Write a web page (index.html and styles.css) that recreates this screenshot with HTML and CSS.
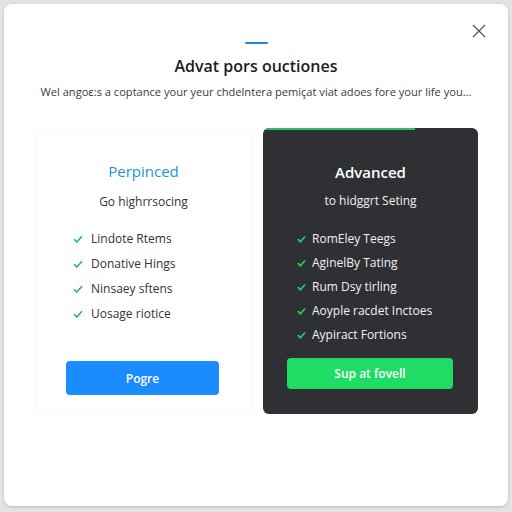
FILE: index.html
```html
<!DOCTYPE html>
<html>
<head>
<meta charset="utf-8">
<link rel="stylesheet" href="styles.css">
</head>
<body>
<div class="modal">
  <button class="close" aria-label="Close">
    <svg width="14" height="14" viewBox="0 0 14 14"><path d="M1 1L13 13M13 1L1 13" stroke="#555" stroke-width="1.3" fill="none"/></svg>
  </button>
  <div class="accent"></div>
  <h1 class="title">Advat pors ouctiones</h1>
  <p class="subtitle">Wel angoɛ:s a coptance your yeur chdelntera pemiçat viat adoes fore your life you...</p>
  <div class="cards">
    <div class="card card-light">
      <div class="card-title">Perpinced</div>
      <div class="card-sub">Go highrrsocing</div>
      <ul class="list">
        <li><svg class="check" viewBox="0 0 10 8"><path d="M1 4.2L3.8 7L9 1.2"/></svg>Lindote Rtems</li>
        <li><svg class="check" viewBox="0 0 10 8"><path d="M1 4.2L3.8 7L9 1.2"/></svg>Donative Hings</li>
        <li><svg class="check" viewBox="0 0 10 8"><path d="M1 4.2L3.8 7L9 1.2"/></svg>Ninsaey sftens</li>
        <li><svg class="check" viewBox="0 0 10 8"><path d="M1 4.2L3.8 7L9 1.2"/></svg>Uosage riotice</li>
      </ul>
      <button class="btn btn-blue">Pogre</button>
    </div>
    <div class="card card-dark">
      <div class="progress"></div>
      <div class="card-title">Advanced</div>
      <div class="card-sub">to hidggrt Seting</div>
      <ul class="list">
        <li><svg class="check" viewBox="0 0 10 8"><path d="M1 4.2L3.8 7L9 1.2"/></svg>RomEley Teegs</li>
        <li><svg class="check" viewBox="0 0 10 8"><path d="M1 4.2L3.8 7L9 1.2"/></svg>AginelBy Tating</li>
        <li><svg class="check" viewBox="0 0 10 8"><path d="M1 4.2L3.8 7L9 1.2"/></svg>Rum Dsy tirling</li>
        <li><svg class="check" viewBox="0 0 10 8"><path d="M1 4.2L3.8 7L9 1.2"/></svg>Aoyple racdet Inctoes</li>
        <li><svg class="check" viewBox="0 0 10 8"><path d="M1 4.2L3.8 7L9 1.2"/></svg>Aypiract Fortions</li>
      </ul>
      <button class="btn btn-green">Sup at fovell</button>
    </div>
  </div>
</div>
</body>
</html>
```
FILE: styles.css
```css
* { box-sizing: border-box; }
html, body { margin: 0; }
body {
  background: #e3e3e3;
  padding: 4px;
  font-family: "Open Sans", "Noto Sans", sans-serif;
  width: 512px;
  height: 512px;
  overflow: hidden;
}
.modal {
  position: relative;
  width: 504px;
  height: 502px;
  background: #fff;
  border-radius: 8px;
  box-shadow: 0 1px 3px rgba(0,0,0,0.18);
  display: flex;
  flex-direction: column;
  align-items: center;
  padding-top: 38px;
}
.close {
  position: absolute;
  top: 20px;
  right: 22px;
  width: 14px;
  height: 14px;
  padding: 0;
  border: 0;
  background: none;
  line-height: 0;
}
.accent {
  width: 23px;
  height: 2px;
  background: #1e88e5;
  border-radius: 1px;
}
.title {
  margin: 11px 0 0;
  font-size: 16px;
  line-height: 22px;
  font-weight: 600;
  color: #1c1c1c;
}
.subtitle {
  margin: 7px 0 0;
  font-size: 11.1px;
  line-height: 16px;
  color: #3a3a3a;
  white-space: nowrap;
}
.cards {
  margin-top: 28px;
  width: 100%;
  display: flex;
  padding: 0 30px 0 31px;
  gap: 11px;
}
.card {
  position: relative;
  height: 286px;
  border-radius: 6px;
  display: flex;
  flex-direction: column;
  align-items: center;
}
.card-light {
  width: 217px;
  margin-top: 1px;
  border: 1px solid #f8f8f8;
  padding-top: 31px;
}
.card-dark {
  width: 215px;
  background: #2e3033;
  padding-top: 34px;
  overflow: hidden;
}
.progress {
  position: absolute;
  top: 0;
  left: 0;
  width: 152px;
  height: 2px;
  background: #22c35e;
}
.card-title {
  font-size: 15px;
  line-height: 20px;
  font-weight: 500;
}
.card-light .card-title { color: #1a95d8; }
.card-dark .card-title { color: #ffffff; font-weight: 600; }
.card-sub {
  font-size: 12px;
  line-height: 16px;
  margin-top: 13px;
}
.card-light .card-sub { color: #333; }
.card-dark .card-sub { color: #f0f0f0; margin-top: 11px; }
.list {
  list-style: none;
  margin: 16px 0 0;
  padding: 0;
  align-self: stretch;
}
.card-dark .list { margin-top: 18px; }
.list li {
  display: flex;
  align-items: center;
  height: 25px;
  font-size: 12px;
  line-height: 16px;
}
.card-light .list { padding-left: 37px; }
.card-light .list li { color: #333; }
.card-dark .list { padding-left: 34px; }
.card-dark .list li { color: #f2f2f2; height: 24px; }
.check {
  width: 10px;
  height: 8px;
  margin-right: 8px;
  fill: none;
  stroke: #1fbf5f;
  stroke-width: 1.6;
  flex: none;
}
.card-dark .check { stroke: #22d05e; stroke-width: 1.9; width: 9px; margin-right: 6px; }
.btn {
  border: 0;
  border-radius: 4px;
  color: #fff;
  font-family: inherit;
  font-size: 12px;
  font-weight: 600;
}
.btn-blue {
  margin-top: 35px;
  width: 153px;
  height: 34px;
  background: #1a8cff;
  align-self: flex-start;
  margin-left: 30px;
}
.btn-green {
  margin-top: 11px;
  width: 166px;
  height: 31px;
  background: #1fdc64;
  align-self: flex-start;
  margin-left: 24px;
}
```
